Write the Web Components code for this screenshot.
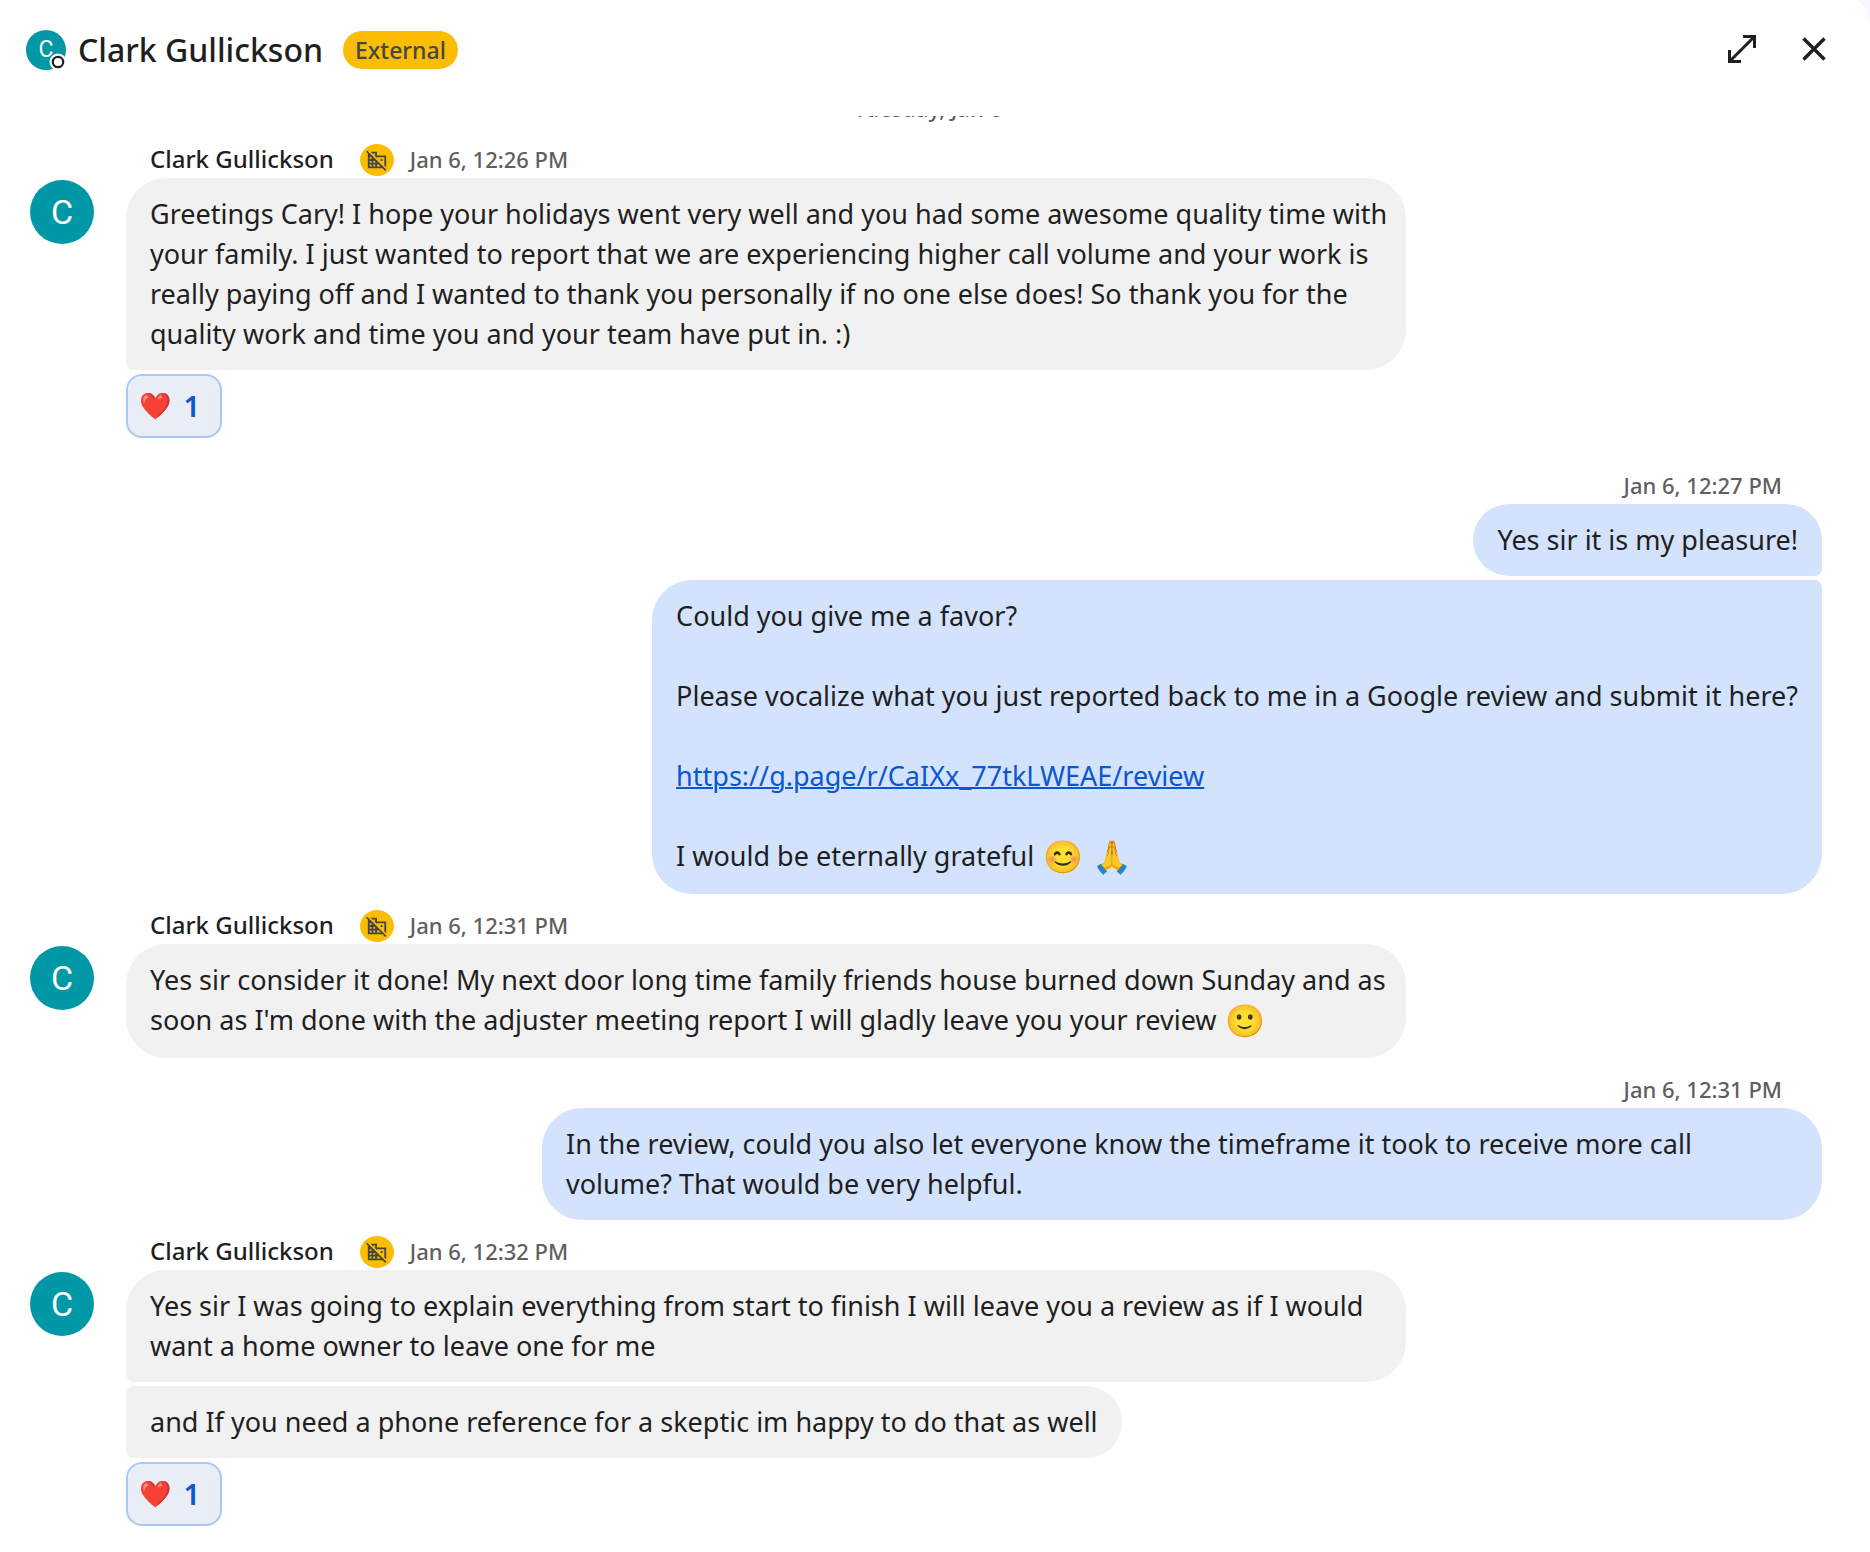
<!DOCTYPE html>
<html lang="en">
<head>
<meta charset="utf-8">
<title>Clark Gullickson</title>
<style>
  body { margin: 0; background: #f5f8fd; color: #1f1f1f; font: 27px/40px "Noto Sans", sans-serif; }
</style>
</head>
<body>
<chat-window>
  <chat-header slot="header" name="Clark Gullickson" tag="External"></chat-header>

  <day-divider>Tuesday, Jan 6</day-divider>

  <chat-group author="Clark Gullickson" time="Jan 6, 12:26 PM">
    <chat-bubble wide square="bl">Greetings Cary! I hope your holidays went very well and you had some awesome quality time with your family. I just wanted to report that we are experiencing higher call volume and your work is really paying off and I wanted to thank you personally if no one else does! So thank you for the quality work and time you and your team have put in. :)</chat-bubble>
    <chat-reaction emoji="❤️" count="1"></chat-reaction>
  </chat-group>

  <chat-group sent time="Jan 6, 12:27 PM">
    <chat-bubble sent square="br">Yes sir it is my pleasure!</chat-bubble>
    <chat-bubble sent square="tr">Could you give me a favor?<br><br>Please vocalize what you just reported back to me in a Google review and submit it here?<br><br><chat-link url="https://g.page/r/CaIXx_77tkLWEAE/review"></chat-link><br><br>I would be eternally grateful <chat-emoji>😊</chat-emoji> <chat-emoji>🙏</chat-emoji></chat-bubble>
  </chat-group>

  <chat-group author="Clark Gullickson" time="Jan 6, 12:31 PM">
    <chat-bubble wide>Yes sir consider it done! My next door long time family friends house burned down Sunday and as soon as I'm done with the adjuster meeting report I will gladly leave you your review <chat-emoji>🙂</chat-emoji></chat-bubble>
  </chat-group>

  <chat-group sent time="Jan 6, 12:31 PM">
    <chat-bubble sent>In the review, could you also let everyone know the timeframe it took to receive more call volume? That would be very helpful.</chat-bubble>
  </chat-group>

  <chat-group author="Clark Gullickson" time="Jan 6, 12:32 PM">
    <chat-bubble wide square="bl">Yes sir I was going to explain everything from start to finish I will leave you a review as if I would want a home owner to leave one for me</chat-bubble>
    <chat-bubble square="tl bl">and If you need a phone reference for a skeptic im happy to do that as well</chat-bubble>
    <chat-reaction emoji="❤️" count="1"></chat-reaction>
  </chat-group>
</chat-window>

<script>
class Base extends HTMLElement {
  connectedCallback() {
    if (this.shadowRoot) return;
    this.attachShadow({ mode: 'open' }).innerHTML = this.render();
  }
  attr(name) { return this.getAttribute(name) || ''; }
}

customElements.define('chat-window', class extends Base {
  render() {
    return `<style>
      :host { display: flex; flex-direction: column; min-height: 100vh; background: #fff;
        border-top-right-radius: 16px 32px; }
      header { height: 100px; margin-bottom: 16px; }
      main { flex: 1; overflow: hidden; display: flex; flex-direction: column; gap: 14px;
        padding: 0 44px 16px 30px; }
      ::slotted(chat-group) { margin-right: 4px; }
    </style>
    <header><slot name="header"></slot></header>
    <main><slot></slot></main>`;
  }
});

customElements.define('user-avatar', class extends Base {
  render() {
    return `<style>
      :host { display: block; position: relative; flex: none; width: 64px; height: 64px;
        border-radius: 50%; background: #0097a7; color: #fff; text-align: center;
        font: 34px/64px Roboto, sans-serif; }
      :host([small]) { width: 40px; height: 40px; font-size: 23px; line-height: 40px; }
      svg { position: absolute; right: -1px; bottom: -1px; display: block; }
    </style>${this.attr('letter')}${this.hasAttribute('small')
      ? '<svg width="18" height="18" viewBox="0 0 18 18"><circle cx="9" cy="9" r="8.5" fill="#fff"/><circle cx="9" cy="9" r="5.2" fill="#fff" stroke="#1f1f1f" stroke-width="2.2"/></svg>'
      : ''}`;
  }
});

customElements.define('chat-header', class extends Base {
  render() {
    return `<style>
      :host { display: flex; align-items: center; height: 100%; padding: 0 32px 0 26px; }
      h1 { margin: 0 20px 0 12px; font-size: 32px; line-height: 40px; font-weight: 500; }
      .tag { border-radius: 19px; padding: 0 12px; background: #fbbc04; color: #444746;
        font-size: 23px; line-height: 38px; font-weight: 500; }
      nav { margin-left: auto; padding-bottom: 3px; display: flex; gap: 24px; }
      button { width: 48px; height: 48px; padding: 0; border: 0; background: none;
        display: grid; place-items: center; color: #1f1f1f; }
      svg { display: block; fill: none; stroke: currentColor; }
    </style>
    <user-avatar small letter="C"></user-avatar>
    <h1>${this.attr('name')}</h1>
    <span class="tag">${this.attr('tag')}</span>
    <nav>
      <button type="button" aria-label="Open in full screen">
        <svg width="30" height="30" viewBox="0 0 30 30" stroke-width="3"><path d="M16 2.500h11.500V14M27.500 2.500L2.500 27.500M2.500 16v11.500H14"/></svg>
      </button>
      <button type="button" aria-label="Close">
        <svg width="30" height="30" viewBox="0 0 30 30" stroke-width="3.400"><path d="M4.500 4.500l21 21M25.500 4.500l-21 21"/></svg>
      </button>
    </nav>`;
  }
});

customElements.define('day-divider', class extends Base {
  render() {
    return `<style>
      :host { display: block; margin: -24px 0 4px; text-align: center; color: #5f5f5f;
        font-size: 22px; line-height: 32px; font-weight: 500; }
    </style><slot></slot>`;
  }
});

customElements.define('chat-group', class extends Base {
  render() {
    const sent = this.hasAttribute('sent');
    return `<style>
      :host { display: flex; gap: 32px; }
      .col { flex: 1; min-width: 0; display: flex; flex-direction: column; align-items: flex-start; gap: 4px; }
      :host([sent]) .col { align-items: flex-end; }
      .meta { display: flex; align-items: center; height: 36px; margin-bottom: -4px; padding: 0 24px; }
      :host([sent]) .meta { padding: 0 40px; }
      .name { margin-right: 26px; font-size: 24px; line-height: 32px; font-weight: 500; }
      .badge { display: grid; place-items: center; width: 34px; height: 32px; margin-right: 16px;
        border-radius: 50%; background: #fbbc04; }
      time { color: #5f5f5f; font-size: 22px; line-height: 32px; font-weight: 500; }
      .name, time { padding-bottom: 2px; }
      user-avatar { margin-top: 38px; }
      svg { display: block; fill: #444746; }
    </style>
    ${sent ? '' : '<user-avatar letter="C"></user-avatar>'}
    <div class="col">
      <div class="meta">
        ${sent ? '' : `<span class="name">${this.attr('author')}</span>
        <span class="badge"><svg width="22" height="22" viewBox="0 0 24 24"><path d="M8 5h2v2h-.9L12 9.900V9h8v8.900l2 2V7H12V3H5.100L8 5.900V5zm8 6h2v2h-2v-2zM1.300 1.800L.1 3.100 2 5v16h16l3 3 1.300-1.300-21-20.900zM4 19v-2h2v2H4zm0-4v-2h2v2H4zm0-4V9h2v2H4zm6 8H8v-2h2v2zm-2-4v-2h2v2H8zm4 4v-2h1.900l2 2H12z"/></svg></span>`}
        <time>${this.attr('time')}</time>
      </div>
      <slot></slot>
    </div>`;
  }
});

customElements.define('chat-bubble', class extends Base {
  render() {
    return `<style>
      :host { display: block; box-sizing: border-box; max-width: 1280px; padding: 16px 24px;
        background: #f1f1f1; border-radius: 40px; }
      :host([wide]) { padding-right: 16px; }
      :host([sent]) { background: #d3e3fd; }
      :host([square~="tl"]) { border-top-left-radius: 8px; }
      :host([square~="tr"]) { border-top-right-radius: 8px; }
      :host([square~="bl"]) { border-bottom-left-radius: 8px; }
      :host([square~="br"]) { border-bottom-right-radius: 8px; }
    </style><slot></slot>`;
  }
});

customElements.define('chat-emoji', class extends Base {
  render() {
    return `<style>
      :host { display: inline-block; margin-left: 2px; vertical-align: -2px;
        font: 32px/42px "Noto Color Emoji", sans-serif; }
    </style><slot></slot>`;
  }
});

customElements.define('chat-link', class extends Base {
  render() {
    return `<style>
      a { color: #0b57d0; text-decoration: underline; text-decoration-thickness: 2px; }
    </style><a href="${this.attr('url')}">${this.attr('url')}</a>`;
  }
});

customElements.define('chat-reaction', class extends Base {
  render() {
    return `<style>
      :host { display: block; margin-bottom: 16px; }
      button { display: flex; align-items: center; gap: 12px; box-sizing: border-box; height: 64px;
        min-width: 96px; padding: 0 11px; border: 2px solid #a8c7fa; border-radius: 16px;
        background: #e9eef6; color: #0b57d0; font: 600 29px/40px "Noto Sans", sans-serif; }
      .emoji { font: 26px/40px "Noto Color Emoji", sans-serif; }
    </style>
    <button type="button" aria-pressed="true"><span class="emoji">${this.attr('emoji')}</span><span>${this.attr('count')}</span></button>`;
  }
});
</script>
</body>
</html>
